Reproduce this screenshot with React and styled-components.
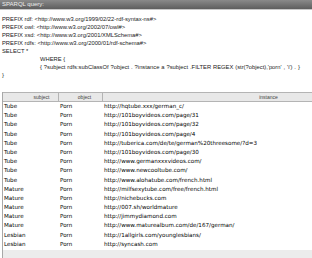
import React from 'react'
import styled, { createGlobalStyle } from 'styled-components'

const GlobalStyle = createGlobalStyle`
  html, body {
    margin: 0;
    padding: 0;
    background: #ffffff;
  }
`

const rows = [
  ['Tube', 'Porn', 'http://hqtube.xxx/german_c/'],
  ['Tube', 'Porn', 'http://101boyvideos.com/page/31'],
  ['Tube', 'Porn', 'http://101boyvideos.com/page/32'],
  ['Tube', 'Porn', 'http://101boyvideos.com/page/4'],
  ['Tube', 'Porn', 'http://tuberica.com/de/te/german%20threesome/?d=3'],
  ['Tube', 'Porn', 'http://101boyvideos.com/page/30'],
  ['Tube', 'Porn', 'http://www.germanxxxvideos.com/'],
  ['Tube', 'Porn', 'http://www.newcooltube.com/'],
  ['Tube', 'Porn', 'http://www.alohatube.com/french.html'],
  ['Mature', 'Porn', 'http://milfsexytube.com/free/french.html'],
  ['Mature', 'Porn', 'http://nichebucks.com'],
  ['Mature', 'Porn', 'http://007.sh/worldmature'],
  ['Mature', 'Porn', 'http://jimmydiamond.com'],
  ['Mature', 'Porn', 'http://www.maturealbum.com/de/167/german/'],
  ['Lesbian', 'Porn', 'http://1allgirls.com/younglesbians/'],
  ['Lesbian', 'Porn', 'http://syncash.com'],
]

const Page = styled.div`
  width: 312px;
  height: 258px;
  overflow: hidden;
  display: flex;
  flex-direction: column;
  font-family: "Liberation Sans", Arial, sans-serif;
`

const TitleBar = styled.div`
  height: 9px;
  background: linear-gradient(#8a8a8a, #5e5e5e);
  border-bottom: 1px solid #c8c8c8;
  color: #ececec;
  font-size: 6px;
  line-height: 9px;
  padding-left: 2px;
`

const Query = styled.div`
  padding: 5px 0 0 2px;
  height: 72px;
  color: #222;
  font-size: 5.8px;
  line-height: 8px;
  white-space: pre;
`

const Line = styled.div`
  padding-left: ${p => p.$indent || 0}px;
  word-spacing: ${p => p.$spread || 0}px;
`

const Table = styled.div`
  margin-top: 5px;
  margin-left: 2px;
  border-left: 1px solid #a8a8a8;
  flex: 1;
  display: flex;
  flex-direction: column;
`

const HeadRow = styled.div`
  display: grid;
  grid-template-columns: 56px 44px 1fr;
  height: 8px;
  background: #e8e8e8;
  border-top: 1px solid #b4b4b4;
  border-bottom: 1px solid #b4b4b4;
`

const HeadCell = styled.div`
  font-size: 5px;
  line-height: 8px;
  color: #444;
  text-align: center;
  padding-left: ${p => p.$shift || 0}px;
  border-right: 1px solid #b4b4b4;
  &:last-child { border-right: none; }
`

const Body = styled.div`
  padding-top: 0;
`

const Row = styled.div`
  display: grid;
  grid-template-columns: 56px 44px 1fr;
  height: 9.2px;
  line-height: 9.2px;
  font-family: "DejaVu Sans", Verdana, sans-serif;
  font-size: 5.6px;
  color: #000;
  white-space: nowrap;
`

const Cell = styled.div`
  padding-left: 1px;
`

const Footer = styled.div`
  flex: 1;
  background: #ececec;
  margin-top: 1px;
`

export default function App() {
  return (
    <Page>
      <GlobalStyle />
      <TitleBar>SPARQL query:</TitleBar>
      <Query>
        <Line>PREFIX rdf: &lt;http://www.w3.org/1999/02/22-rdf-syntax-ns#&gt;</Line>
        <Line>PREFIX owl: &lt;http://www.w3.org/2002/07/owl#&gt;</Line>
        <Line>PREFIX xsd: &lt;http://www.w3.org/2001/XMLSchema#&gt;</Line>
        <Line>PREFIX rdfs: &lt;http://www.w3.org/2000/01/rdf-schema#&gt;</Line>
        <Line>SELECT *</Line>
        <Line $indent={38}>WHERE {"{"}</Line>
        <Line $indent={38} $spread={0.3}>{"{ ?subject rdfs:subClassOf ?object . ?instance a ?subject .FILTER REGEX (str(?object),'porn' , 'i') . }"}</Line>
        <Line>{"}"}</Line>
      </Query>
      <Table>
        <HeadRow>
          <HeadCell $shift={22}>subject</HeadCell>
          <HeadCell $shift={8}>object</HeadCell>
          <HeadCell $shift={122}>instance</HeadCell>
        </HeadRow>
        <Body>
          {rows.map((r, i) => (
            <Row key={i}>
              <Cell>{r[0]}</Cell>
              <Cell>{r[1]}</Cell>
              <Cell>{r[2]}</Cell>
            </Row>
          ))}
        </Body>
        <Footer />
      </Table>
    </Page>
  )
}
